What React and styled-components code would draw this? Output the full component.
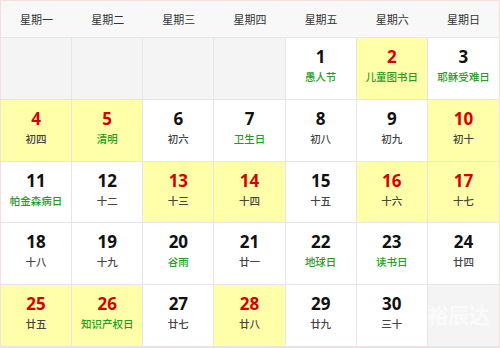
import React from "react";
import styled, { createGlobalStyle } from "styled-components";

const Global = createGlobalStyle`
  html, body { margin: 0; padding: 0; background: #fff; }
  body { font-family: "Noto Sans CJK SC", "Noto Sans", sans-serif; }
`;

const Frame = styled.div`
  width: 500px;
  height: 348px;
  box-sizing: border-box;
  border: 1px solid #f8dede;
  display: grid;
  grid-template-columns: repeat(7, 1fr);
  grid-template-rows: 37px repeat(5, 1fr);
`;

const HeadCell = styled.div`
  background: #f8f8f8;
  border-bottom: 1px solid #efe3e3;
  display: flex;
  align-items: center;
  justify-content: center;
  font-size: 11px;
  color: #333;
`;

const Cell = styled.div`
  position: relative;
  box-sizing: border-box;
  background: ${(p) => (p.$empty ? "#f4f4f4" : p.$hl ? "#ffffaa" : "#fff")};
  border-right: ${(p) => (p.$last ? "none" : "1px solid #e6e6e6")};
  border-bottom: 1px solid #e6e6e6;
  display: flex;
  flex-direction: column;
  align-items: center;
  padding-top: 7px;
  overflow: hidden;
`;

const Num = styled.div`
  font-family: "Open Sans", "Noto Sans", sans-serif;
  font-weight: 700;
  font-size: 17px;
  line-height: 24px;
  color: ${(p) => (p.$red ? "#d60000" : "#111")};
`;

const Sub = styled.div`
  font-size: 10.5px;
  line-height: 16px;
  font-weight: 500;
  color: ${(p) => (p.$green ? "#1f9e1f" : "#444")};
`;

const Watermark = styled.div`
  position: absolute;
  left: 0;
  top: 14px;
  font-size: 21px;
  font-weight: 700;
  color: rgba(255, 255, 255, 0.6);
  letter-spacing: -0.5px;
  white-space: nowrap;
`;

const heads = ["星期一", "星期二", "星期三", "星期四", "星期五", "星期六", "星期日"];

// [num, sub, red, yellow, green]
const E = null;
const days = [
  E, E, E, E,
  [1, "愚人节", 0, 0, 1],
  [2, "儿童图书日", 1, 1, 1],
  [3, "耶稣受难日", 0, 0, 1],
  [4, "初四", 1, 1, 0],
  [5, "清明", 1, 1, 1],
  [6, "初六", 0, 0, 0],
  [7, "卫生日", 0, 0, 1],
  [8, "初八", 0, 0, 0],
  [9, "初九", 0, 0, 0],
  [10, "初十", 1, 1, 0],
  [11, "帕金森病日", 0, 0, 1],
  [12, "十二", 0, 0, 0],
  [13, "十三", 1, 1, 0],
  [14, "十四", 1, 1, 0],
  [15, "十五", 0, 0, 0],
  [16, "十六", 1, 1, 0],
  [17, "十七", 1, 1, 0],
  [18, "十八", 0, 0, 0],
  [19, "十九", 0, 0, 0],
  [20, "谷雨", 0, 0, 1],
  [21, "廿一", 0, 0, 0],
  [22, "地球日", 0, 0, 1],
  [23, "读书日", 0, 0, 1],
  [24, "廿四", 0, 0, 0],
  [25, "廿五", 1, 1, 0],
  [26, "知识产权日", 1, 1, 1],
  [27, "廿七", 0, 0, 0],
  [28, "廿八", 1, 1, 0],
  [29, "廿九", 0, 0, 0],
  [30, "三十", 0, 0, 0],
  E,
];

export default function App() {
  return (
    <>
      <Global />
      <Frame>
        {heads.map((h) => (
          <HeadCell key={h}>{h}</HeadCell>
        ))}
        {days.map((d, i) => {
          const last = i % 7 === 6;
          if (!d) {
            return (
              <Cell key={i} $empty $last={last}>
                {i === 34 && <Watermark>裕辰达</Watermark>}
              </Cell>
            );
          }
          const [n, s, red, hl, green] = d;
          return (
            <Cell key={i} $hl={!!hl} $last={last}>
              <Num $red={!!red}>{n}</Num>
              <Sub $green={!!green}>{s}</Sub>
            </Cell>
          );
        })}
      </Frame>
    </>
  );
}
